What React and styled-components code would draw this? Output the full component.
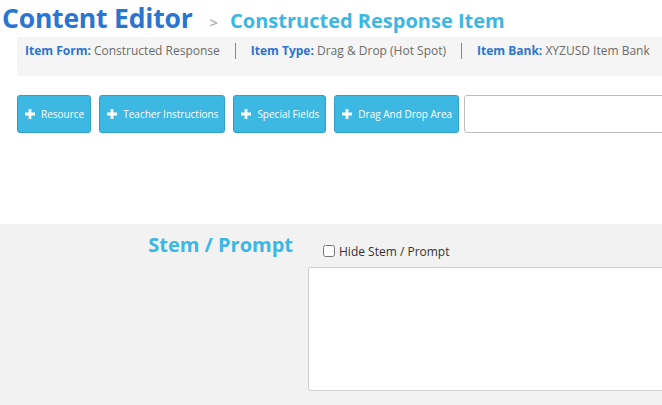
import React from 'react'
import styled, { createGlobalStyle } from 'styled-components'

const GlobalStyle = createGlobalStyle`
  html, body {
    margin: 0;
    padding: 0;
    background: #ffffff;
    font-family: "Open Sans", "Liberation Sans", sans-serif;
    overflow: hidden;
  }
`

const Page = styled.div`
  width: 662px;
  height: 405px;
  display: flex;
  flex-direction: column;
`

const Header = styled.div`
  display: flex;
  align-items: baseline;
  height: 37px;
  padding-left: 2px;
  white-space: nowrap;
`

const Title = styled.h1`
  margin: 0;
  font-size: 26.5px;
  font-weight: 700;
  color: #2a74d2;
  line-height: 36px;
  letter-spacing: -0.2px;
`

const Chevron = styled.span`
  margin: 0 12px 0 17px;
  color: #b8b8b8;
  font-size: 15px;
  font-weight: 700;
`

const SubTitle = styled.h2`
  margin: 0;
  font-size: 20px;
  font-weight: 700;
  color: #3bb7e4;
`

const InfoBar = styled.div`
  margin-left: 17px;
  height: 39px;
  background: #f5f5f5;
  display: flex;
  align-items: flex-start;
  padding: 6px 0 0 8px;
  box-sizing: border-box;
  font-size: 12px;
  white-space: nowrap;
`

const InfoItem = styled.div`
  color: #6b6b6b;
  padding: 0 ${p => (p.$last ? 0 : 15)}px 0 ${p => (p.$first ? 0 : 15)}px;
  border-left: ${p => (p.$first ? 'none' : '1px solid #888')};
  line-height: 16px;

  b {
    color: #2a74d2;
    font-weight: 700;
  }
`

const Toolbar = styled.div`
  display: flex;
  gap: 8px;
  margin: 19px 0 0 17px;
  height: 38px;
`

const AddButton = styled.button`
  display: flex;
  align-items: center;
  gap: 6px;
  height: 38px;
  padding: 0 6px 0 7px;
  background: #3db8e3;
  border: 1px solid #2e9fd0;
  border-radius: 3px;
  color: #ffffff;
  font-family: inherit;
  font-size: 10px;
  white-space: nowrap;
`

const Search = styled.input`
  flex: 1;
  margin-left: -3px;
  height: 38px;
  box-sizing: border-box;
  border: 1px solid #bdbdbd;
  border-radius: 3px;
  margin-right: -10px;
`

const Spacer = styled.div`
  height: 91px;
`

const Section = styled.div`
  flex: 1;
  background: #f2f2f2;
  display: grid;
  grid-template-columns: 293px 1fr;
  column-gap: 15px;
  padding-top: 10px;
`

const SectionLabel = styled.div`
  text-align: right;
  font-size: 20px;
  font-weight: 700;
  color: #3bb7e4;
  line-height: 22px;
`

const Field = styled.div`
  display: flex;
  flex-direction: column;
  padding-top: 9px;
`

const CheckRow = styled.label`
  display: flex;
  align-items: center;
  gap: 4px;
  margin-left: 15px;
  font-size: 12px;
  color: #333;
  height: 16px;

  input {
    margin: 0;
    width: 12px;
    height: 12px;
  }
`

const Editor = styled.div`
  margin-top: 8px;
  height: 122px;
  margin-right: -10px;
  background: #ffffff;
  border: 1px solid #cfcfcf;
  border-radius: 3px;
`

const Plus = () => (
  <svg width="10" height="10" viewBox="0 0 10 10">
    <path d="M3.6 0h2.8v3.6H10v2.8H6.4V10H3.6V6.4H0V3.6h3.6z" fill="#fff" />
  </svg>
)

const buttons = ['Resource', 'Teacher Instructions', 'Special Fields', 'Drag And Drop Area']

export default function App() {
  return (
    <Page>
      <GlobalStyle />
      <Header>
        <Title>Content Editor</Title>
        <Chevron>&gt;</Chevron>
        <SubTitle>Constructed Response Item</SubTitle>
      </Header>
      <InfoBar>
        <InfoItem $first><b>Item Form:</b> Constructed Response</InfoItem>
        <InfoItem><b>Item Type:</b> Drag &amp; Drop (Hot Spot)</InfoItem>
        <InfoItem $last><b>Item Bank:</b> XYZUSD Item Bank</InfoItem>
      </InfoBar>
      <Toolbar>
        {buttons.map(b => (
          <AddButton key={b}>
            <Plus />
            {b}
          </AddButton>
        ))}
        <Search type="text" />
      </Toolbar>
      <Spacer />
      <Section>
        <SectionLabel>Stem / Prompt</SectionLabel>
        <Field>
          <CheckRow>
            <input type="checkbox" />
            Hide Stem / Prompt
          </CheckRow>
          <Editor />
        </Field>
      </Section>
    </Page>
  )
}
